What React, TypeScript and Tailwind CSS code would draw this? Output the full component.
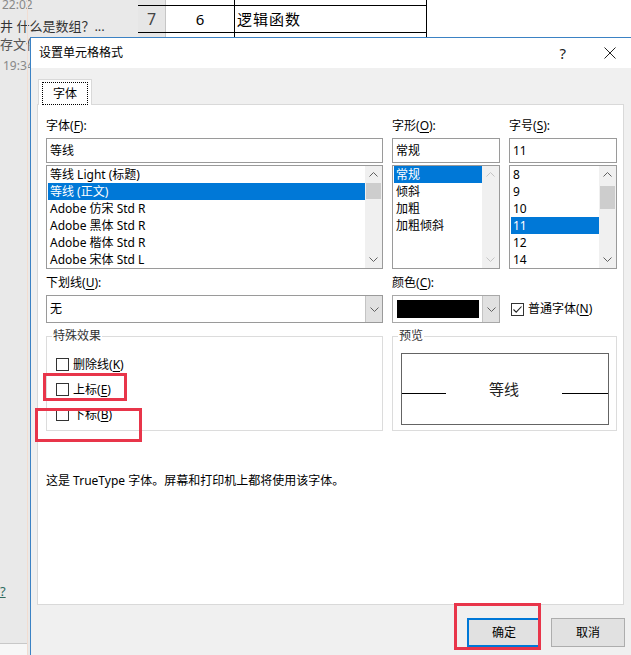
import React from 'react';

const Chevron = ({ dir, color = '#606060' }: { dir: 'up' | 'down'; color?: string }) => (
  <svg width="9" height="5" viewBox="0 0 9 5">
    <path
      d={dir === 'up' ? 'M0.5 4.5 L4.5 0.5 L8.5 4.5' : 'M0.5 0.5 L4.5 4.5 L8.5 0.5'}
      fill="none"
      stroke={color}
      strokeWidth="1"
    />
  </svg>
);

const ScrollBar = ({ thumb, disabled }: { thumb?: string; disabled?: boolean }) => {
  const c = disabled ? '#c4c4c4' : '#606060';
  return (
    <div className="w-[17px] h-full bg-[#f0f0f0] flex flex-col">
      <div className="h-[17px] flex items-center justify-center">
        <Chevron dir="up" color={c} />
      </div>
      <div className="flex-1">{thumb && <div className={`mx-[1px] bg-[#cdcdcd] ${thumb}`} />}</div>
      <div className="h-[17px] flex items-center justify-center">
        <Chevron dir="down" color={c} />
      </div>
    </div>
  );
};

const ListBox = ({
  items,
  selected,
  width,
  thumb,
  disabled,
}: {
  items: string[];
  selected: number;
  width: string;
  thumb?: string;
  disabled?: boolean;
}) => (
  <div className={`${width} h-[104px] mt-[2px] border border-[#9a9a9a] bg-white flex`}>
    <div className="flex-1 pl-[1px] overflow-hidden">
      {items.map((it, i) => (
        <div
          key={it}
          className={`h-[17px] leading-[17px] pl-[2px] whitespace-nowrap ${
            i === selected ? 'bg-[#0078d7] text-white' : 'text-black'
          }`}
        >
          {it}
        </div>
      ))}
    </div>
    <ScrollBar thumb={thumb} disabled={disabled} />
  </div>
);

const Label = ({ text, hot, tail }: { text: string; hot: string; tail?: string }) => (
  <div className="h-[16px] leading-[16px] whitespace-nowrap">
    {text}(<span className="underline underline-offset-2">{hot}</span>){tail ?? ':'}
  </div>
);

const TextBox = ({ value, width }: { value: string; width: string }) => (
  <div className={`${width} h-[25px] mt-[4px] border border-[#9a9a9a] bg-white pl-[3px] leading-[23px]`}>
    {value}
  </div>
);

const CheckBox = ({ checked }: { checked?: boolean }) => (
  <div className="w-[13px] h-[13px] border border-[#333] bg-white flex items-center justify-center">
    {checked && (
      <svg width="11" height="11" viewBox="0 0 11 11">
        <path d="M1.5 5.5 L4.2 8.2 L9.5 2.5" fill="none" stroke="#222" strokeWidth="1.1" />
      </svg>
    )}
  </div>
);

const CheckRow = ({ text, hot }: { text: string; hot: string }) => (
  <div className="h-[25px] flex items-center gap-[4px] pl-[9px]">
    <CheckBox />
    <span className="leading-[16px]">
      {text}(<span className="underline underline-offset-2">{hot}</span>)
    </span>
  </div>
);

export default function App() {
  return (
    <div className="relative w-[631px] h-[655px] overflow-hidden bg-white font-['Noto_Sans','Noto_Sans_CJK_SC',sans-serif] text-[12px] text-black">
      {/* background: chat list + sheet */}
      <div className="flex h-full">
        <div className="w-[138px] h-full bg-[#e9e9e9] flex flex-col text-[#555] relative">
          <div className="-mt-[4px] pl-[2px] text-[12px] leading-[18px] text-[#888]">22:02</div>
          <div className="mt-[3px] text-[13px] leading-[18px] whitespace-nowrap text-[#333]">井 什么是数组？...</div>
          <div className="mt-[0px] text-[13px] leading-[18px] text-[#555]">存文件</div>
          <div className="mt-[4px] pl-[3px] text-[12px] leading-[18px] text-[#888]">19:34</div>
          <div className="mt-auto mb-[56px] text-[13px] leading-[16px] text-[#2d6b61] underline">?</div>
          <div className="absolute left-0 bottom-0 w-[28px] h-[12px] border-t border-[#c8c8c8] bg-[#f7f7f7]" />
          <div className="absolute left-[27px] top-0 w-px h-full bg-[#f1ddd2]" />
        </div>
        <div className="flex flex-col -mt-[21px] text-[15px]">
          {[
            ['6', '5', '信息函数'],
            ['7', '6', '逻辑函数'],
            ['8', '', ''],
          ].map(([h, n, t]) => (
            <div key={h} className="flex h-[27px] border-b border-black">
              <div className="w-[28px] bg-[#e6e6e6] border-r border-[#c6c6c6] text-[#444] flex items-center justify-center text-[16px]">
                {h}
              </div>
              <div className="w-[69px] border-r border-black flex items-center justify-center">{n}</div>
              <div className="w-[192px] border-r border-black flex items-center pl-[2px] tracking-[1px]">{t}</div>
            </div>
          ))}
        </div>
      </div>

      {/* dialog */}
      <div className="absolute left-[30px] top-[37px] w-[612px] h-[630px] border border-[#3b82c4] bg-[#f0f0f0] flex flex-col">
        <div className="h-[30px] bg-white flex items-center pl-[8px]">
          <span className="leading-[16px]">设置单元格格式</span>
          <span className="ml-auto text-[15px] leading-[16px] text-[#222]">?</span>
          <svg className="ml-[38px] mr-[25px]" width="12" height="12" viewBox="0 0 12 12">
            <path d="M0.5 0.5 L11.5 11.5 M11.5 0.5 L0.5 11.5" stroke="#222" strokeWidth="1" />
          </svg>
        </div>

        <div className="flex-1 px-[6px] pt-[11px]">
          <div className="relative z-10 ml-[1px] w-[54px] h-[26px] -mb-[1px] bg-white border border-b-0 border-[#d9d9d9] px-[3px] pt-[2px]">
            <div className="h-full border border-dotted border-black flex items-center justify-center leading-[16px]">
              字体
            </div>
          </div>

          <div className="w-[587px] h-[501px] border border-[#d9d9d9] bg-white pl-[8px] pt-[13px]">
            {/* row 1 */}
            <div className="flex">
              <div className="w-[337px]">
                <Label text="字体" hot="F" />
                <TextBox value="等线" width="w-[337px]" />
                <ListBox
                  width="w-[337px]"
                  selected={1}
                  thumb="mt-0 h-[16px]"
                  items={[
                    '等线 Light (标题)',
                    '等线 (正文)',
                    'Adobe 仿宋 Std R',
                    'Adobe 黑体 Std R',
                    'Adobe 楷体 Std R',
                    'Adobe 宋体 Std L',
                  ]}
                />
              </div>
              <div className="w-[108px] ml-[9px]">
                <Label text="字形" hot="O" />
                <TextBox value="常规" width="w-[108px]" />
                <ListBox width="w-[108px]" selected={0} disabled items={['常规', '倾斜', '加粗', '加粗倾斜']} />
              </div>
              <div className="w-[108px] ml-[9px]">
                <Label text="字号" hot="S" />
                <TextBox value="11" width="w-[108px]" />
                <ListBox
                  width="w-[108px]"
                  selected={3}
                  thumb="mt-[3px] h-[23px]"
                  items={['8', '9', '10', '11', '12', '14']}
                />
              </div>
            </div>

            {/* row 2 */}
            <div className="flex mt-[6px]">
              <div className="w-[337px]">
                <Label text="下划线" hot="U" />
                <div className="mt-[4px] h-[28px] border border-[#9a9a9a] bg-white flex">
                  <div className="flex-1 pl-[3px] leading-[26px]">无</div>
                  <div className="w-[17px] bg-[#e1e1e1] border-l border-[#c4c4c4] flex items-center justify-center">
                    <Chevron dir="down" />
                  </div>
                </div>
              </div>
              <div className="w-[108px] ml-[9px]">
                <Label text="颜色" hot="C" />
                <div className="mt-[4px] h-[28px] border border-[#a8a8a8] bg-white flex">
                  <div className="flex-1 p-[4px] pr-[3px]">
                    <div className="h-full bg-black" />
                  </div>
                  <div className="w-[17px] bg-[#e1e1e1] border-l border-[#c4c4c4] flex items-center justify-center">
                    <Chevron dir="down" />
                  </div>
                </div>
              </div>
              <div className="ml-[10px] pt-[20px]">
                <div className="h-[28px] flex items-center gap-[4px] pl-[1px]">
                  <CheckBox checked />
                  <span className="leading-[16px]">
                    普通字体(<span className="underline underline-offset-2">N</span>)
                  </span>
                </div>
              </div>
            </div>

            {/* row 3: groups */}
            <div className="flex mt-[13px]">
              <div className="relative w-[337px] h-[95px] border border-[#dcdcdc] pt-[15px]">
                <span className="absolute left-[5px] -top-[9px] px-[1px] bg-white leading-[16px] text-[#333]">特殊效果</span>
                <CheckRow text="删除线" hot="K" />
                <CheckRow text="上标" hot="E" />
                <CheckRow text="下标" hot="B" />
              </div>
              <div className="relative w-[225px] h-[95px] ml-[9px] border border-[#dcdcdc] pl-[8px] pt-[16px]">
                <span className="absolute left-[5px] -top-[9px] px-[1px] bg-white leading-[16px] text-[#333]">预览</span>
                <div className="w-[208px] h-[72px] border border-[#646464] flex items-center">
                  <div className="w-[44px] h-px bg-black mt-[9px]" />
                  <div className="flex-1 text-center text-[15px] leading-[20px] text-[#222]">等线</div>
                  <div className="w-[46px] h-px bg-black mt-[9px]" />
                </div>
              </div>
            </div>

            <div className="mt-[42px] leading-[16px]">这是 TrueType 字体。屏幕和打印机上都将使用该字体。</div>
          </div>

          <div className="flex gap-[10px] ml-[430px] mt-[13px]">
            <div className="w-[74px] h-[29px] border-2 border-[#0078d7] bg-[#e1e1e1] flex items-center justify-center leading-[16px]">
              确定
            </div>
            <div className="w-[74px] h-[29px] border border-[#adadad] bg-[#e1e1e1] flex items-center justify-center leading-[16px]">
              取消
            </div>
          </div>
        </div>
      </div>

      {/* red annotation boxes */}
      <div className="absolute left-[43px] top-[373px] w-[84px] h-[28px] border-[3px] border-[#e8354a]" />
      <div className="absolute left-[35px] top-[408px] w-[107px] h-[34px] border-[3px] border-[#e8354a]" />
      <div className="absolute left-[454px] top-[603px] w-[87px] h-[47px] border-[3px] border-[#e8354a]" />
    </div>
  );
}
